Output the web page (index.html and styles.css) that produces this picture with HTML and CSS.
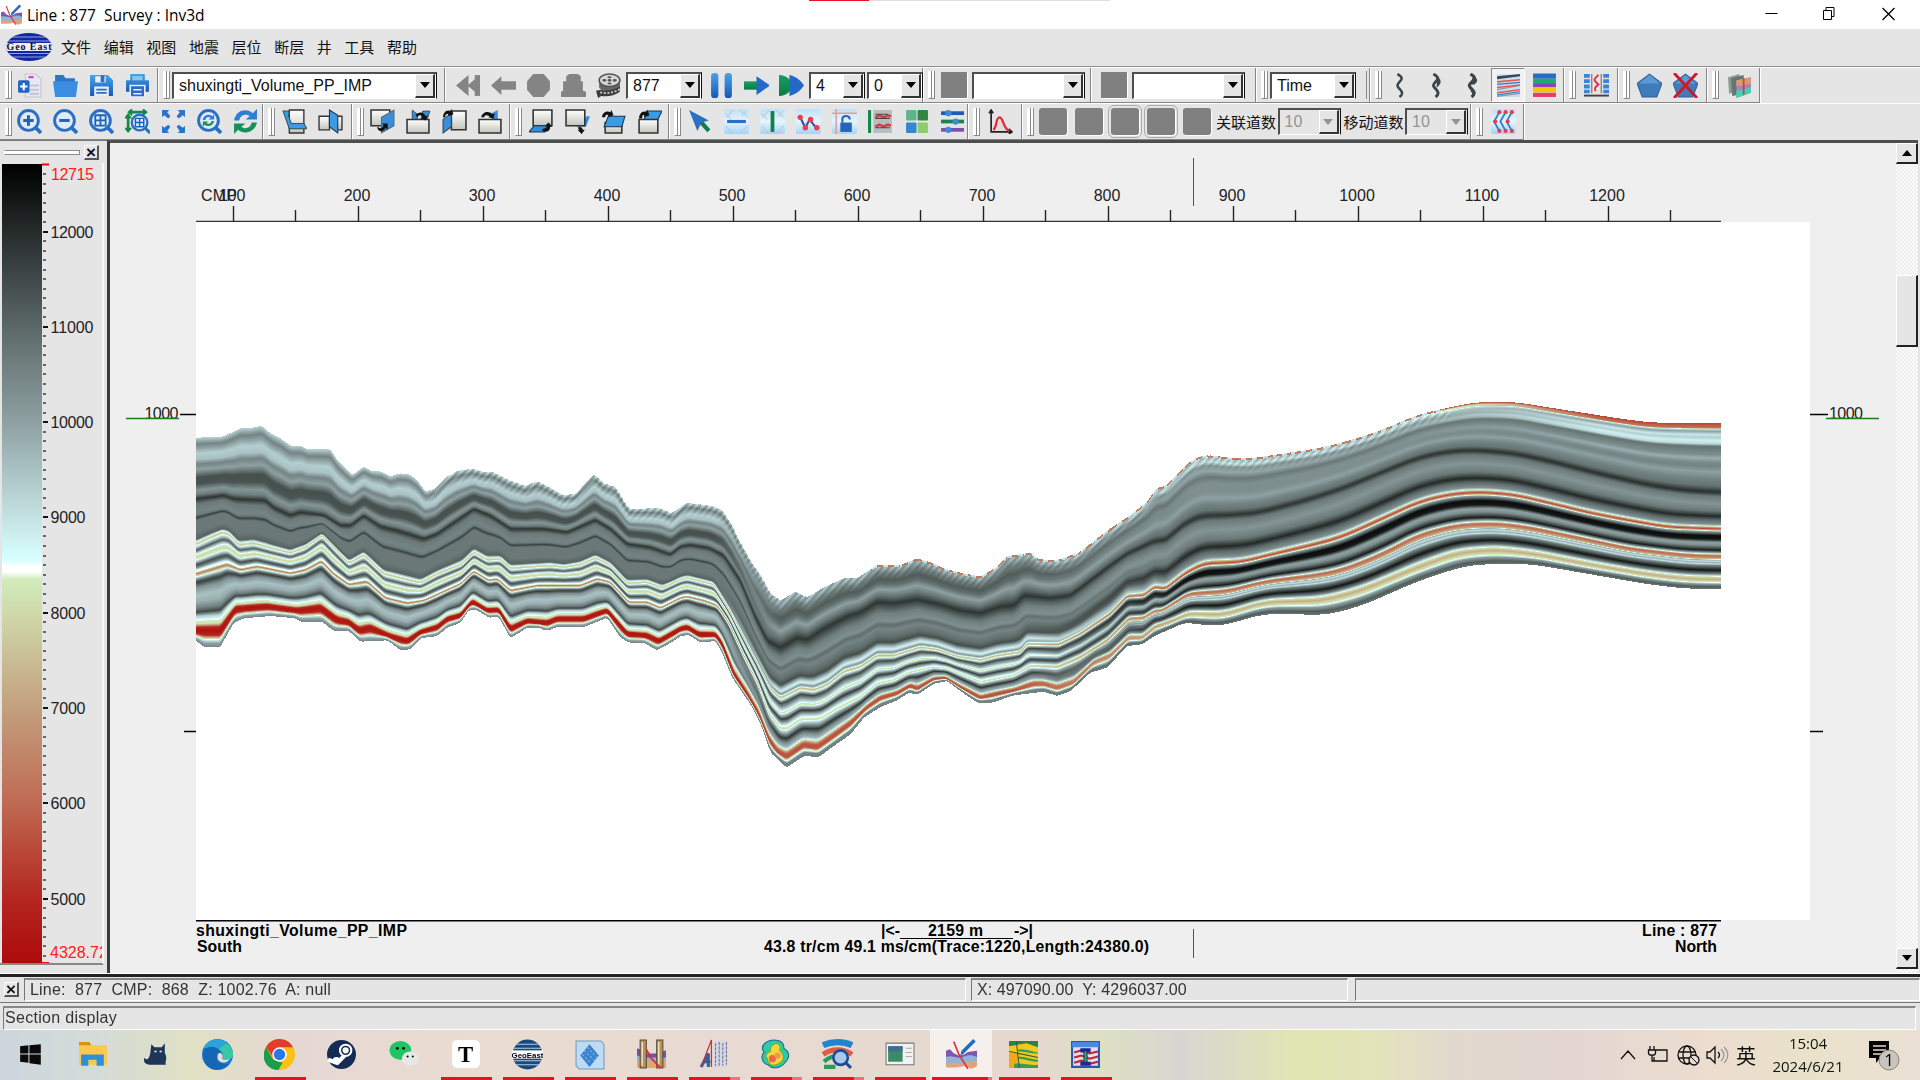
FILE: index.html
```html
<!DOCTYPE html>
<html lang="zh-CN">
<head>
<meta charset="utf-8">
<title>Line : 877 Survey : Inv3d</title>
<link rel="stylesheet" href="styles.css">
</head>
<body>
<svg class="defs" aria-hidden="true">
<defs>
<linearGradient id="gb" x2="0" y2="1"><stop stop-color="#4aa3e6"/><stop offset="1" stop-color="#1757b8"/></linearGradient>
<linearGradient id="gg" x2="0" y2="1"><stop stop-color="#18a060"/><stop offset="1" stop-color="#0b7a45"/></linearGradient>
<linearGradient id="gp" x2="0" y2="1"><stop stop-color="#fff"/><stop offset="1" stop-color="#c4c4bc"/></linearGradient>
<linearGradient id="gs" x2="0" y2="1"><stop stop-color="#bfe2f8"/><stop offset=".5" stop-color="#e6f4fd"/><stop offset="1" stop-color="#a5d3f2"/></linearGradient>
<symbol id="app" viewBox="0 0 24 24"><path d="M0 9l3-1 3 3 4 2 4-1 3-2 7-1v6H0z" fill="#7d56b0"/><path d="M0 14c5-2 9 2 13 0s7-2 11 0v4c-5 3-8-1-12 1s-8 0-12 1z" fill="#8fb4d8"/><path d="M0 19c6-2 10 1 14-1s6 0 10-1v4l-4 2-6-2-6 1-8 0z" fill="#e3a27e"/><path d="M6 2l4 10 7 11" stroke="#e23440" stroke-width="1.300" fill="none"/><path d="M11 13l1-4 9-9 2 2-9 9z" fill="#2469c4"/></symbol>
<symbol id="new" viewBox="0 0 24 24"><path d="M8 1h10l5 5v17H8z" fill="#e8e8f2" stroke="#c3c3d4"/><path d="M11 4h5" stroke="#b04ad0" stroke-width="2"/><path d="M12 12h9M12 16h9M12 20h9" stroke="#c5c5d8" stroke-width="2"/><rect x="1" y="7" width="11" height="12" rx="1.500" fill="#2166c2"/><path d="M6.500 9.500v7M3 13h7" stroke="#fff" stroke-width="2"/></symbol>
<symbol id="open" viewBox="0 0 24 24"><path d="M2 2h8l2 3h9v5H2z" fill="#2c74cc"/><path d="M0 8h24l-2 15H2z" fill="#3a8de0"/></symbol>
<symbol id="save" viewBox="0 0 24 24"><path d="M1 2h17l5 5v15H1z" fill="url(#gb)"/><path d="M6 3v6h10V3M5 22v-9h14v9" fill="#e6eef6"/><path d="M12 3h2v5h-2zM7 16h10M7 19h10" stroke="#2a70c8" stroke-width="1.600" fill="#2a70c8"/></symbol>
<symbol id="print" viewBox="0 0 24 24"><path d="M5 1h14v7H5zM1 7h22v11H1z" fill="url(#gb)"/><path d="M7 3h10v4H7z" fill="#8cc4f0"/><path d="M5 12h14v11H5z" fill="#2a6cc6" stroke="#e8eef6" stroke-width="1.500"/><path d="M8 16h8M8 20h8" stroke="#e8eef6" stroke-width="1.500"/></symbol>
<symbol id="rew" viewBox="0 0 24 24"><path d="M12 2v20L0 12zM23 2v20L11 12z" fill="#848484"/><path d="M18 2h5v20h-5z" fill="#848484"/></symbol>
<symbol id="back" viewBox="0 0 24 24"><path d="M0 12l10-9v5h14v8H10v5z" fill="#848484"/></symbol>
<symbol id="oct" viewBox="0 0 24 24"><path d="M7 1h10l6 7v8l-6 7H7l-6-7V8z" fill="#848484"/></symbol>
<symbol id="bell" viewBox="0 0 24 24"><path d="M2 17V8h3V3l3-2h8l3 2v5h2v9l3 1v5H0v-5z" fill="#848484"/></symbol>
<symbol id="film" viewBox="0 0 24 24"><path d="M3 7v7c3 5 16 5 20 0V7z" fill="#666"/><ellipse cx="13" cy="7" rx="10" ry="6" fill="#d8d8d4" stroke="#555" stroke-width="1.500"/><g fill="#555"><ellipse cx="13" cy="7" rx="2" ry="1.300"/><ellipse cx="8" cy="7" rx="2" ry="1.300"/><ellipse cx="18" cy="7" rx="2" ry="1.300"/><ellipse cx="13" cy="4" rx="2" ry="1"/><ellipse cx="13" cy="10" rx="2" ry="1"/></g><path d="M0 17l5-1c5 2 13 0 18-3v5c-5 4-13 5-18 4l-3 2z" fill="#3c3c3c"/><path d="M4 18.500c6 2 14 0 19-3" stroke="#bbb" stroke-dasharray="2 1.500" stroke-width="2" fill="none"/></symbol>
<symbol id="pause" viewBox="0 0 24 24"><rect x="2" y="0" width="7" height="24" rx="3" fill="url(#gb)"/><rect x="15" y="0" width="7" height="24" rx="3" fill="url(#gb)"/></symbol>
<symbol id="fwd" viewBox="0 0 24 24"><path d="M0 8h13v8H0z" fill="url(#gg)"/><path d="M12 3l13 9-13 9z" fill="#2468c8"/></symbol>
<symbol id="ff" viewBox="0 0 24 24"><path d="M0 2c8 0 11 5 14 10C11 17 8 22 0 22z" fill="url(#gg)"/><path d="M10 2c8 2 11 6 14 10-3 4-6 8-14 10z" fill="#2468c8"/></symbol>
<symbol id="mag" viewBox="0 0 24 24"><circle cx="11" cy="11" r="9.500" fill="#dfeaf6" stroke="#2b6fc4" stroke-width="2.800"/><path d="M17 17l6 6" stroke="#2b6fc4" stroke-width="3.600"/></symbol>
<symbol id="zin" viewBox="0 0 24 24"><use href="#mag"/><path d="M11 6v10M6 11h10" stroke="#2060b8" stroke-width="2.800"/></symbol>
<symbol id="zout" viewBox="0 0 24 24"><use href="#mag"/><path d="M6 11h10" stroke="#2060b8" stroke-width="2.800"/></symbol>
<symbol id="zbox" viewBox="0 0 24 24"><use href="#mag"/><path d="M6 6h10v10H6zM11 6v10M6 11h10" stroke="#2060b8" stroke-width="1.700" fill="none"/></symbol>
<symbol id="zfit" viewBox="0 0 24 24"><circle cx="14" cy="13" r="7.500" fill="#dfeaf6" stroke="#2b6fc4" stroke-width="2.200"/><path d="M19 18l5 5" stroke="#2b6fc4" stroke-width="3"/><path d="M10 9h8v8h-8zM14 9v8M10 13h8" stroke="#2060b8" stroke-width="1.400" fill="none"/><path d="M4 3h16M3 5v16" stroke="#12884d" stroke-width="2.600"/><path d="M7-1L2 3l5 4zM17-1l5 4-5 4zM-1 9l4-5 4 5zM-1 18l4 5 4-5z" fill="#12884d"/></symbol>
<symbol id="full" viewBox="0 0 24 24"><path d="M1 1h7L6 3l3 4-2 2-4-3-2 2zM23 1h-7l2 2-3 4 2 2 4-3 2 2zM1 23h7l-2-2 3-4-2-2-4 3-2-2zM23 23h-7l2-2-3-4 2-2 4 3 2-2z" fill="#2b74c8"/></symbol>
<symbol id="arrows" viewBox="0 0 24 24"><path d="M1 11C3 0 14-1 19 4l4-4v10H12l4-3C12 4 7 6 6 11z" fill="#2b7fd4"/><path d="M23 13c-2 10-13 12-18 7l-4 4V14h11l-4 3c4 3 9 1 10-4z" fill="#16915a"/></symbol>
<symbol id="zref" viewBox="0 0 24 24"><use href="#mag"/><use href="#arrows" x="5" y="5" width="12" height="12"/></symbol>
<symbol id="s1" viewBox="0 0 24 24"><path d="M7 1h14v14H7zM7 18h14v5H7z" fill="url(#gp)" stroke="#333" stroke-width="1.300"/><path d="M1 2h5l1 2-1 2 3 8h12l3 5H7z" fill="#3b9ce4" stroke="#355"/></symbol>
<symbol id="s2" viewBox="0 0 24 24"><path d="M1 7h10v13H1zM18 7h5v13h-5z" fill="url(#gp)" stroke="#333" stroke-width="1.300"/><path d="M11 1l8 5v17l-8-6z" fill="#3b9ce4" stroke="#234"/></symbol>
<symbol id="s3" viewBox="0 0 24 24"><path d="M1 1h18v15H1z" fill="url(#gp)" stroke="#333" stroke-width="1.500"/><path d="M23 1v15l-12 7V8z" fill="#3b8ed8" stroke="#567"/><path d="M7 17c0 5 6 6 8 1l2 2v-6h-5l1 2c-2 3-3 3-6 1z" fill="#111"/></symbol>
<symbol id="s4" viewBox="0 0 24 24"><path d="M6 1l5 4v7H6zM16 2h7l-3 9h-6z" fill="#3b8ed8" stroke="#234" stroke-width=".7"/><path d="M1 10h21v13H1z" fill="url(#gp)" stroke="#333" stroke-width="1.500"/><path d="M9 6c4-5 9-2 10 1l2-1-2 5-5-2 2-1c-2-3-4-2-5 0z" fill="#111"/></symbol>
<symbol id="s5" viewBox="0 0 24 24"><path d="M9 2h14v18H9z" fill="url(#gp)" stroke="#333" stroke-width="1.500"/><path d="M1 10l8-6v13l-8 6z" fill="#3b8ed8" stroke="#345"/><path d="M1 8C1 3 5 0 8 2l1-2 2 5-5 2V5C4 4 3 6 3 8z" fill="#111"/></symbol>
<symbol id="s6" viewBox="0 0 24 24"><path d="M13 4l6-3v12h-6z" fill="#3b8ed8"/><path d="M1 10h21v13H1z" fill="url(#gp)" stroke="#333" stroke-width="1.500"/><path d="M3 8c1-5 7-7 11-3l2-1-1 5-5-1 1-1c-3-2-5-1-5 1z" fill="#111"/></symbol>
<symbol id="s7" viewBox="0 0 24 24"><path d="M4 1h18v15H4z" fill="url(#gp)" stroke="#333" stroke-width="1.500"/><path d="M5 16h16l-6 6H0z" fill="#2d8fe0" stroke="#234"/><path d="M13 21c5 2 8-1 7-4h2l-3-4-4 3h2c0 2-2 3-4 3z" fill="#111"/></symbol>
<symbol id="s8" viewBox="0 0 24 24"><path d="M21 7h3l-4 10h-9z" fill="#2d8fe0"/><path d="M1 1h18v15H1z" fill="url(#gp)" stroke="#333" stroke-width="1.500"/><path d="M12 18c3-2 5 0 5 2h2l-3 4-4-4h2z" fill="#111"/></symbol>
<symbol id="s9" viewBox="0 0 24 24"><path d="M4 13h16v10H4z" fill="url(#gp)" stroke="#333" stroke-width="1.500"/><path d="M7 7h16l-3 10H3z" fill="#3a9ce6" stroke="#234"/><path d="M1 8c0-4 4-7 8-5l1-2 2 5-5 2V6C5 5 4 6 4 8z" fill="#111"/></symbol>
<symbol id="s10" viewBox="0 0 24 24"><path d="M9 2h15l-4 8H7z" fill="#3a9ce6" stroke="#234"/><path d="M2 10h18v13H2z" fill="url(#gp)" stroke="#333" stroke-width="1.500"/><path d="M2 9c0-4 3-8 7-6l1-2 2 5-5 2V6C5 5 5 7 5 9z" fill="#111"/></symbol>
<symbol id="cur" viewBox="0 0 24 24"><path d="M12 12l8 9" stroke="#0f7d4c" stroke-width="4"/><path d="M1 1l19 10-7 2-4 8z" fill="#2a70c4"/></symbol>
<symbol id="pad" viewBox="0 0 24 24"><rect width="24" height="24" rx="2" fill="url(#gs)"/></symbol>
<symbol id="hl" viewBox="0 0 24 24"><use href="#pad"/><path d="M2 8L9 1M15 1l8 7M2 17l6 6M16 23l7-7M1 4l6 6M17 7l5-5" stroke="#b8cbd8"/><path d="M3 12h18" stroke="#2570c4" stroke-width="3"/></symbol>
<symbol id="vl" viewBox="0 0 24 24"><use href="#pad"/><path d="M2 8L9 1M15 1l8 7M2 17l6 6M16 23l7-7M1 4l6 6M17 7l5-5" stroke="#b8cbd8"/><path d="M12 2v20" stroke="#0e8248" stroke-width="3.600"/></symbol>
<symbol id="poly" viewBox="0 0 24 24"><use href="#pad"/><path d="M4 8l5 10 4-8 7 9" stroke="#3a4c9c" stroke-width="2" fill="none"/><g fill="#e8404c"><circle cx="4" cy="8" r="2.600"/><circle cx="9" cy="18" r="2.600"/><circle cx="14" cy="10" r="2.600"/><circle cx="20" cy="18" r="2.600"/></g></symbol>
<symbol id="lock" viewBox="0 0 24 24"><use href="#pad"/><path d="M0 4h24M4 0v24" stroke="#e89a9e" stroke-width="1.500"/><path d="M10 13V9c1-3 6-3 7 0v1" stroke="#2464bc" stroke-width="2" fill="none"/><path d="M8 13h11v9H8z" fill="#2464bc"/></symbol>
<symbol id="wig" viewBox="0 0 24 24"><path d="M0 1h3v22H0z" fill="#10894c"/><path d="M5 1h18v22H5z" fill="#b4c0c0"/><path d="M7 8l4-2 4 2 4-2 3 1M7 17l4-2 4 2 4-2 3 1" stroke="#d83c40" stroke-width="2.400" fill="none"/><path d="M7 9h14M7 18h14M7 5h12" stroke="#444"/></symbol>
<symbol id="grid" viewBox="0 0 24 24"><rect x="2" y="1" width="10" height="10" rx="1" fill="#5db58c"/><rect x="13" y="1" width="10" height="10" rx="1" fill="#348540"/><rect x="2" y="13" width="10" height="10" rx="1" fill="#3586cc"/><rect x="13" y="13" width="10" height="10" rx="1" fill="#92cb6c"/></symbol>
<symbol id="slid" viewBox="0 0 24 24"><path d="M1 4h22" stroke="#1f58b4" stroke-width="3.600"/><path d="M1 12h22" stroke="#168550" stroke-width="3.600"/><path d="M1 20h22" stroke="#7c50ac" stroke-width="3.600"/><g fill="#3a8bd8"><circle cx="8" cy="4" r="3"/><circle cx="15" cy="12" r="3"/><circle cx="8" cy="20" r="3"/></g></symbol>
<symbol id="curve" viewBox="0 0 24 24"><path d="M3 1v21h20M1 4l2-3 2 3M20 19l3 3-3 2" stroke="#222" stroke-width="1.600" fill="none"/><path d="M5 20c4-2 2-12 6-12s3 10 9 13" stroke="#e8283c" stroke-width="2.200" fill="#ddd"/></symbol>
<symbol id="q1" viewBox="0 0 24 24"><path d="M9 1c11 6-4 8 1 13 4 4 5 6 1 9" stroke="#3c4548" stroke-width="2.400" fill="none"/></symbol>
<symbol id="q2" viewBox="0 0 24 24"><path d="M9 1c11 6-4 8 1 13 4 4 5 6 1 9" stroke="#3c4548" stroke-width="2.800" fill="none"/><path d="M13 3c5 5 3 8-1 11z" fill="#3c4548"/></symbol>
<symbol id="q3" viewBox="0 0 24 24"><path d="M10 1c11 6-5 8 0 13 4 4 5 6 1 9" stroke="#3c4548" stroke-width="3" fill="none"/><path d="M13 2c5 5 4 6 1 9h-4zM9 14l6 4-2 5z" fill="#3c4548"/></symbol>
<symbol id="seis" viewBox="0 0 24 24"><path d="M1 1l22 1v21H1z" fill="#c9dff0"/><path d="M1 3l22-2v2L1 6z" fill="#33485a"/><path d="M1 16l22-4M1 22.500l22-3" stroke="#8898a8" stroke-width="1.200"/><path d="M1 8.500l22-2M1 14l22-2.500M1 19l22-3" stroke="#e8594c" stroke-width="1.500"/><path d="M1 11l22-2M1 21l22-3" stroke="#3478c8" stroke-width="1.200"/></symbol>
<symbol id="bars" viewBox="0 0 24 24"><path d="M1 3h22" stroke="#286cc8" stroke-width="5"/><path d="M1 8h22" stroke="#22a878" stroke-width="5"/><path d="M1 12h22" stroke="#8448b8" stroke-width="4"/><path d="M1 16h22" stroke="#f6c400" stroke-width="5"/><path d="M1 21h22" stroke="#e83c68" stroke-width="4"/></symbol>
<symbol id="tie" viewBox="0 0 26 24"><path d="M3 0v20M23 0v20" stroke="#3a84d8" stroke-width="6" stroke-dasharray="4 1.500"/><path d="M8 0v20M18 0v20" stroke="#888" stroke-width="1.500"/><path d="M15 1c-6 6-5 5 0 10-4 3-4 4-3 7" stroke="#f02838" stroke-width="2" fill="none"/><path d="M0 22.500h26" stroke="#444" stroke-width="2"/></symbol>
<symbol id="pent" viewBox="0 0 24 24"><path d="M12 1l12 9-5 13H5L0 10z" fill="#3f7cbc" stroke="#2f649c"/><path d="M12 2l10 8H2z" fill="#6aa8dc" opacity=".7"/></symbol>
<symbol id="pentx" viewBox="0 0 24 24"><use href="#pent"/><path d="M1 0l22 24M23 0L1 24" stroke="#d01828" stroke-width="2.800"/></symbol>
<symbol id="vol" viewBox="0 0 24 24"><path d="M1 4l11-3v16L2 20z" fill="#8b9b94"/><path d="M4 5l12-3v18L5 22z" fill="#64766e"/><path d="M9 7l14-3v15L9 24z" fill="#ae80b8"/><path d="M9 7l14-3v6L9 13z" fill="#d89a70"/><path d="M9 17l14-3v5L9 24z" fill="#3dd4b0"/><path d="M16 5v16" stroke="#d83848" stroke-width="1.600"/></symbol>
<symbol id="wells" viewBox="0 0 24 24"><use href="#pad"/><path d="M8 3L3 12l5 9M14 3L9 12l5 9M20 3l-5 9 5 9" stroke="#2f84cc" stroke-width="1.800" fill="none"/><g fill="#ee3a48"><circle cx="8" cy="3" r="2"/><circle cx="14" cy="3" r="2"/><circle cx="20" cy="3" r="2"/><circle cx="4" cy="12" r="2"/><circle cx="16" cy="12" r="2"/><circle cx="8" cy="21" r="2"/><circle cx="14" cy="21" r="2"/><circle cx="20" cy="21" r="2"/></g></symbol>
</defs>
</svg>

<header class="titlebar">
  <svg class="appicon"><use href="#app"/></svg>
  <span class="title">Line : 877&nbsp; Survey : Inv3d</span>
  <div class="topstrip"><i></i></div>
  <svg class="wctl" viewBox="0 0 150 30"><path d="M14.500 13.500h12M72.500 10.500h8v9h-8zM75 10v-2.500h8v9h-2" fill="none" stroke="#000"/><path d="M131.500 8l12 12M143.500 8l-12 12" fill="none" stroke="#000" stroke-width="1.300"/></svg>
</header>

<nav class="menubar">
  <svg class="brand" viewBox="0 0 46 28"><clipPath id="bc"><ellipse cx="23" cy="14" rx="23" ry="14"/></clipPath><g clip-path="url(#bc)"><path d="M0 0h46v28H0z" fill="#1228a0"/><path d="M0 4h46M0 8h46M0 20.500h46M0 24h46" stroke="#8fa4e0"/><path d="M0 10h46v8H0z" fill="#eef"/></g><text x="23" y="17" text-anchor="middle" textLength="45" class="brandtext">Geo East</text></svg>
  <span>文件</span><span>编辑</span><span>视图</span><span>地震</span><span>层位</span><span>断层</span><span>井</span><span>工具</span><span>帮助</span>
</nav>

<div class="toolrow">
  <div class="group w158"><b class="grip"></b><svg class="i"><use href="#new"/></svg><svg class="i"><use href="#open"/></svg><svg class="i"><use href="#save"/></svg><svg class="i"><use href="#print"/></svg></div>
  <div class="group w287"><b class="grip"></b><div class="combo c265">shuxingti_Volume_PP_IMP<u></u></div></div>
  <div class="group w478 nogrip play"><svg class="i"><use href="#rew"/></svg><svg class="i"><use href="#back"/></svg><svg class="i"><use href="#oct"/></svg><svg class="i"><use href="#bell"/></svg><svg class="i"><use href="#film"/></svg><div class="combo c75">877<u></u></div><svg class="i"><use href="#pause"/></svg><svg class="i"><use href="#fwd"/></svg><svg class="i"><use href="#ff"/></svg><div class="combo c56">4<u></u></div><div class="combo c56">0<u></u></div></div>
  <div class="group w168"><b class="grip"></b><i class="sq"></i><div class="combo c113"><u></u></div></div>
  <div class="group w165 nogrip"><i class="sq"></i><div class="combo c113"><u></u></div></div>
  <div class="group w114"><b class="grip"></b><div class="combo c86">Time<u></u></div><b class="rule"></b></div>
  <div class="group w194"><b class="grip"></b><svg class="i"><use href="#q1"/></svg><svg class="i"><use href="#q2"/></svg><svg class="i"><use href="#q3"/></svg><span class="pressed"><svg class="i"><use href="#seis"/></svg></span><svg class="i"><use href="#bars"/></svg></div>
  <div class="group w54"><b class="grip"></b><svg class="i tie"><use href="#tie"/></svg></div>
  <div class="group w89"><b class="grip"></b><svg class="i shift"><use href="#pent"/></svg><svg class="i"><use href="#pentx"/></svg></div>
  <div class="group w53"><b class="grip"></b><svg class="i tie"><use href="#vol"/></svg></div>
</div>
<div class="toolrow second">
  <div class="group w263"><b class="grip"></b><svg class="i"><use href="#zin"/></svg><svg class="i"><use href="#zout"/></svg><svg class="i"><use href="#zbox"/></svg><svg class="i"><use href="#zfit"/></svg><svg class="i"><use href="#full"/></svg><svg class="i"><use href="#zref"/></svg><svg class="i"><use href="#arrows"/></svg></div>
  <div class="group w89"><b class="grip"></b><svg class="i shift"><use href="#s1"/></svg><svg class="i"><use href="#s2"/></svg></div>
  <div class="group w158"><b class="grip"></b><svg class="i"><use href="#s3"/></svg><svg class="i"><use href="#s4"/></svg><svg class="i"><use href="#s5"/></svg><svg class="i"><use href="#s6"/></svg></div>
  <div class="group w159"><b class="grip"></b><svg class="i shift"><use href="#s7"/></svg><svg class="i"><use href="#s8"/></svg><svg class="i"><use href="#s9"/></svg><svg class="i"><use href="#s10"/></svg></div>
  <div class="group w299"><b class="grip"></b><svg class="i shift"><use href="#cur"/></svg><svg class="i"><use href="#hl"/></svg><svg class="i"><use href="#vl"/></svg><svg class="i"><use href="#poly"/></svg><svg class="i"><use href="#lock"/></svg><svg class="i"><use href="#wig"/></svg><svg class="i"><use href="#grid"/></svg><svg class="i"><use href="#slid"/></svg></div>
  <div class="group w54"><b class="grip"></b><svg class="i tie"><use href="#curve"/></svg></div>
  <div class="group w449"><b class="grip"></b><i class="sq lg"></i><i class="sq lg"></i><i class="sq lg down"></i><i class="sq lg down"></i><i class="sq lg"></i><span class="lbl">关联道数</span><div class="combo off c63">10<u></u></div><span class="lbl">移动道数</span><div class="combo off c63">10<u></u></div></div>
  <div class="group w53"><b class="grip"></b><svg class="i tie"><use href="#wells"/></svg></div>
</div>

<main class="work">
  <aside class="dock">
    <div class="dockhead"><b></b><span class="close">×</span></div>
    <div class="scale"><div class="ramp"></div><svg id="ticks" width="62" height="804"></svg></div>
  </aside>
  <section class="view">
    <svg id="axis" class="axis" width="1786" height="79"></svg>
    <div class="plotrow">
      <svg class="side left" viewBox="0 0 86 698"><path d="M70 192.500h16M74 509.500h12" stroke="#000" stroke-width="1.400"/><text x="34.500" y="197" textLength="34">1000</text><path d="M16 196.500h53" stroke="#1d7a1d" stroke-width="1.400"/></svg>
      <div class="plot"><canvas id="section" width="1525" height="698"></canvas></div>
      <svg class="side right" viewBox="0 0 86 698"><path d="M0 192.500h18M0 509.500h13" stroke="#000" stroke-width="1.400"/><text x="19" y="197" textLength="34">1000</text><path d="M16 196.500h53" stroke="#1d7a1d" stroke-width="1.400"/></svg>
    </div>
    <svg class="foot" width="1786" height="54"><path d="M86 .5h1525" stroke="#000" stroke-width="2"/><path d="M790 18.500h113" stroke="#000"/><path d="M1083.500 9v29" stroke="#1d7a1d"/>
      <text x="86" y="16" textLength="211">shuxingti_Volume_PP_IMP</text><text x="87" y="32" textLength="45">South</text>
      <text x="771" y="16">|&lt;-</text><text x="818" y="16" textLength="55">2159 m</text><text x="904" y="16">-&gt;|</text><text x="654" y="32" textLength="385">43.8 tr/cm 49.1 ms/cm(Trace:1220,Length:24380.0)</text>
      <text x="1532" y="16" textLength="75">Line : 877</text><text x="1565" y="32" textLength="42">North</text></svg>
  </section>
  <div class="scroll"><b class="btn up"></b><b class="thumb"></b><b class="btn dn"></b></div>
</main>

<div class="status"><span class="close">×</span><div class="cell a">Line:  877  CMP:  868  Z: 1002.76  A: null</div><div class="cell b">X: 497090.00  Y: 4296037.00</div><div class="cell c"></div></div>
<div class="hint"><div class="cell">Section display</div></div>

<footer class="taskbar">
  <div class="task"><svg viewBox="0 0 30 30"><path d="M4 7l8-1v8H4zM13 6l11-1v9H13zM4 15h8v8l-8-1zM13 15h11v10l-11-1.500z" fill="#0a0a0a"/></svg></div>
  <div class="task"><svg viewBox="0 0 30 30"><path d="M1 3h10l2 3h15v19H1z" fill="#fbc94d"/><path d="M1 3h10l2 3H1z" fill="#d8920c"/><path d="M3 26V15h22v11h-7v-6h-8v6z" fill="#2f8ede"/></svg></div>
  <div class="task"><svg viewBox="0 0 30 30"><path d="M11 5l3 3h7l3-4v9c3 7 0 8 1 12H9c-6-1-5-4-5-7 2 3 5 2 6-5z" fill="#1d3557"/><path d="M14 12h2M19 12h2" stroke="#fff" stroke-width="1.500"/></svg></div>
  <div class="task"><svg viewBox="0 0 30 30"><circle cx="15" cy="15" r="15" fill="#0f7fd4"/><path d="M2 9C7-2 26-2 30 13c1 7-5 8-10 6 3-8-8-13-18-10z" fill="#38c8a4"/><path d="M2 8C7-1 18-2 24 4l-8 6z" fill="#2ba4dc"/><path d="M2 10c9-6 17 0 17 6-8 0-5 10 7 8-12 13-29 2-24-14z" fill="#1566b4"/><path d="M15 16c0-4 6-3 5 2-2 2 3 3 7 1-2 5-13 6-12-3z" fill="#e6dcd8"/></svg></div>
  <div class="task run"><svg viewBox="0 0 30 30"><circle cx="15" cy="15" r="15" fill="#fbc116"/><path d="M2 8C8-3 23-2 28 8H15l-6 10z" fill="#e33b2e"/><path d="M2 8l7 12 9 3-4 7C2 30-4 18 2 8z" fill="#1e9c4a"/><circle cx="15" cy="15" r="7" fill="#fff"/><circle cx="15" cy="15" r="5.500" fill="#2a78e8"/></svg></div>
  <div class="task"><svg viewBox="0 0 30 30"><circle cx="15" cy="15" r="14" fill="#142c54"/><path d="M2 20l9 3 7-7" stroke="#fff" stroke-width="4" fill="none"/><circle cx="19" cy="11" r="5.500" fill="#142c54" stroke="#fff" stroke-width="2"/><circle cx="19" cy="11" r="3" fill="#fff"/><circle cx="10" cy="21" r="3.500" fill="#fff"/></svg></div>
  <div class="task"><svg viewBox="0 0 30 30"><ellipse cx="12" cy="11" rx="10.500" ry="9" fill="#1fc465"/><circle cx="9" cy="9" r="1.300"/><circle cx="15" cy="9" r="1.300"/><ellipse cx="21.500" cy="19" rx="8" ry="7" fill="#e8e8e8"/><circle cx="19" cy="17" r="1"/><circle cx="24" cy="17" r="1"/></svg></div>
  <div class="task run"><svg viewBox="0 0 30 30"><rect x="2" y="1" width="27" height="27" rx="5" fill="#fff"/><text x="15" y="22" text-anchor="middle" class="tt">T</text></svg></div>
  <div class="task run"><svg viewBox="0 0 30 30"><clipPath id="gc"><circle cx="15" cy="15" r="14.500"/></clipPath><g clip-path="url(#gc)"><path d="M0 0h30v30H0z" fill="#174a80"/><path d="M2 5h26M0 9h30M0 21h30M4 25h22" stroke="#b8cce0"/></g><path d="M0 11h30v8H0z" fill="#fff"/><text x="15" y="18" text-anchor="middle" class="ge">GeoEast</text></svg></div>
  <div class="task run"><svg viewBox="0 0 30 30"><path d="M2 2h24l3 3v24H5l-3-3z" fill="#bcdcf6" stroke="#7899b8"/><path d="M15 5l9 11-9 11-9-11z" fill="#3e83d0"/><path d="M10 11l10 10M8 15l8 8M13 8l9 10" stroke="#8bbcf0" stroke-dasharray="2"/></svg></div>
  <div class="task run"><svg viewBox="0 0 30 30"><path d="M1 9l5 2 5 3h9l9-3v9H1z" fill="#7650a4"/><path d="M1 16l10 2h18v5H1z" fill="#8fb4d8"/><path d="M1 21h28v7H1z" fill="#dca870"/><path d="M4 1h6v27H4zM20 1h6v27h-6z" fill="#b9905a" stroke="#5c4a38"/><path d="M6 3v23M22 3v23" stroke="#dfe6c0" stroke-width="1.500"/><path d="M10 10l5 9 9 9" stroke="#e02838" stroke-width="1.600" fill="none"/></svg></div>
  <div class="task run more"><svg viewBox="0 0 30 30"><path d="M15 2h14v25H15z" fill="#d8d8e4"/><path d="M17 4v22M20.500 3v23M24 4v22M27.500 3v22" stroke="#666e90" stroke-dasharray="3 1"/><path d="M3 27l7-13v13M5 22h7" stroke="#34609c" stroke-width="3" fill="none"/><path d="M3 27L13 1v26" stroke="#c83040" stroke-width="1.200" fill="none"/></svg></div>
  <div class="task run more"><svg viewBox="0 0 30 30"><path d="M6 3C13-1 24 1 23 9c5 3 7 8 1 14 -4 6-13 6-16 2C2 24 0 16 4 13 1 9 2 6 6 3z" fill="#29cba8" stroke="#268"/><path d="M12 6c5-4 9 0 7 5 5 4 5 10-1 13-5 3-10 1-11-5-3-3 0-6 3-7 0-3 0-5 2-6z" fill="#f4d438" stroke="#7a3"/><circle cx="12" cy="19" r="3.500" fill="#e9684c"/><circle cx="17" cy="16" r="3" fill="#ee9850"/></svg></div>
  <div class="task run more"><svg viewBox="0 0 30 30"><path d="M1 6c9-4 20-4 28 0" stroke="#2084d0" stroke-width="6" fill="none"/><path d="M1 15c8-6 20-6 28 0" stroke="#e05c44" stroke-width="5" fill="none"/><path d="M2 22c4-4 7-5 10-5M2 27h11" stroke="#219e60" stroke-width="4" fill="none"/><circle cx="18" cy="18" r="7" fill="#a8c8ec" stroke="#1b4e98" stroke-width="2.500"/><path d="M23 23l5 5" stroke="#1b4e98" stroke-width="3"/></svg></div>
  <div class="task run"><svg viewBox="0 0 30 30"><path d="M2 4h27v21H2z" fill="#f2f2f2" stroke="#777"/><path d="M4 7h14v15H4z" fill="#3b8a68"/><path d="M4 7h14v5H4z" fill="#3d7090"/><path d="M21 9h6M21 13h6M21 17h6" stroke="#aaa"/></svg></div>
  <div class="task run active"><svg viewBox="0 0 24 24"><use href="#app"/></svg></div>
  <div class="task run"><svg viewBox="0 0 30 30"><path d="M1 2h28v26H1z" fill="#f4c81c"/><path d="M1 2h28v6L18 4 1 7z" fill="#248448"/><path d="M1 14h9v14H1z" fill="#f0a818"/><path d="M10 10c6-1 13 2 19 3v1c-7 0-14-2-19-2zM10 17c7 0 12 3 19 3v2c-8 0-13-3-19-3zM6 24c9-1 16 2 23 1v3H6z" fill="#30a058"/><path d="M8 2l3 26M1 12l28 6" stroke="#3c5c28"/></svg></div>
  <div class="task run"><svg viewBox="0 0 30 30"><path d="M2 3h26v24H2z" fill="#e8dce8" stroke="#2358b4" stroke-width="2"/><path d="M2 3h26v5H2z" fill="#4a8ae0"/><path d="M4 13l7-2 8 3 8-2M4 18l7-2 8 3 8-2M4 23l7-2 8 3 8-2" stroke="#b82838" stroke-width="2" fill="none"/><path d="M10 11h10M15 10v15M10 24h10" stroke="#1c2890" stroke-width="4"/><path d="M15 12v10" stroke="#2cb44c" stroke-width="2"/></svg></div>
  <div class="tray">
    <svg viewBox="0 0 150 30"><g fill="none" stroke="#111" stroke-width="1.300"><path d="M8 19l7-8 7 8M41 10h13v11H41v-4M37 6v4M41 6v4M35.500 10h7v3c0 3-7 3-7 0zM39 15v6h3"/><circle cx="74" cy="15" r="9"/><ellipse cx="74" cy="15" rx="4" ry="9"/><path d="M65 12h18M65 18h18M94 12h3l5-5v16l-5-5h-3z"/><path d="M105 12c2 2 2 4 0 6"/><path d="M108 9c4 4 4 8 0 12M111 7c5 5 5 11 0 16" stroke="#999"/></g><circle cx="81" cy="20" r="5" fill="#e6dad2" stroke="#111" stroke-width="1.300"/><path d="M78 17l6 6" stroke="#111"/></svg>
    <span class="ime">英</span>
    <div class="clock"><span>15:04</span><span>2024/6/21</span></div>
    <svg class="note" viewBox="0 0 34 34"><path d="M1 3h20v17h-9l-4 5v-5H1z" fill="#000"/><path d="M5 8h13M5 12h13M5 16h10" stroke="#e8dccc" stroke-width="1.500"/><circle cx="21" cy="22" r="10" fill="#c8c4bc" stroke="#8a8680"/><text x="21" y="28" text-anchor="middle">1</text></svg>
  </div>
</footer>
<script src="section.js"></script>
</body>
</html>
```
FILE: styles.css
```css
* { box-sizing: border-box; }
body { margin: 0; width: 1920px; height: 1080px; overflow: hidden; display: flex; flex-direction: column; background: #e5e5e5; color: #111; font: 16px "Liberation Sans", "Noto Sans CJK SC", sans-serif; }
.defs { position: absolute; width: 0; height: 0; }

.titlebar { height: 29px; background: #fff; display: flex; align-items: center; position: relative; flex: none; }
.appicon { width: 21px; height: 22px; margin: 0 5px 0 1px; }
.title { font: 15.500px "Open Sans", "Noto Sans", sans-serif; color: #000; flex: 1; }
.topstrip { position: absolute; left: 809px; top: 0; width: 301px; height: 1px; background: #dedede; }
.topstrip i { display: block; width: 60px; height: 1px; background: #e81123; }
.wctl { width: 150px; height: 30px; margin-right: 19px; }

.menubar { height: 38px; flex: none; display: flex; align-items: center; gap: 12.600px; font-size: 15px; padding: 0 0 2px 6px; border-bottom: 1px solid #8d8d8d; }
.brand { width: 46px; height: 28px; margin-right: -3.500px; }
.brandtext { font: bold 10px "Liberation Serif", serif; fill: #111; }

.toolrow { display: flex; height: 36px; flex: none; border-top: 1px solid #fff; }
.second { height: 37px; }
.group { display: flex; align-items: center; flex: none; border-right: 1px solid #858585; border-bottom: 1px solid #858585; box-shadow: 1px 0 #fff; }
.group:first-child .grip { margin-right: 0; }
.nogrip { padding-left: 6px; }
.grip { width: 7px; height: 28px; margin: 0 1px 0 5px; flex: none; border: solid #8a8a8a; border-width: 0 1px; background: linear-gradient(90deg, #fff 40%, #8a8a8a 40% 60%, #fff 60%); border-left-color: #fff; border-bottom: 1px solid #8a8a8a; }
.rule { width: 1px; height: 28px; background: #8a8a8a; margin-left: 8px; }
.i { width: 25px; height: 25px; margin: 0 6px 0 5px; flex: none; }
.play .i { margin: 0 5px; }
.i.tie { margin-left: 7px; }
.i.shift { margin-left: 6px; }
.pressed { width: 34px; height: 34px; margin: 0 2px 0 0; flex: none; display: grid; place-items: center; background: #f1f1f1; border: 1px solid #888; border-right-color: #fff; border-bottom-color: #fff; }
.pressed .i { margin: 0; }
.combo { height: 27px; flex: none; display: flex; justify-content: space-between; align-items: center; background: #fff; border: 2px solid #4c4f4c; border-right: 1px solid #111; border-bottom: 1px solid #fff; padding: 0 0 0 5px; margin-right: 2px; white-space: nowrap; }
.combo u { width: 20px; height: 24px; margin: 0 1px 0 auto; background: #e5e5e5; border: 1px solid #fff; border-right: 2px solid #333; border-bottom: 2px solid #333; display: grid; place-items: center; }
.combo u::after { content: ""; border: 5px solid transparent; border-top: 6px solid #000; border-bottom: 0; }
.combo.off { background: #e5e5e5; color: #949494; }
.combo.off u::after { border-top-color: #949494; }
.sq { width: 26px; height: 26px; background: #808080; margin: 0 5px 0 5px; flex: none; box-shadow: 1px 1px #fff; }
.nogrip .sq { margin-left: 4px; }
.sq.lg { width: 28px; height: 27px; border-radius: 3px; margin: 0 4px; }
.sq.lg.down { outline: 1px solid #aaa; outline-offset: 2px; }
.lbl { font-size: 15px; width: 61px; margin-left: 1px; white-space: nowrap; }
.w53 { width: 53px; } .w54 { width: 54px; } .w89 { width: 89px; } .w114 { width: 114px; } .w158 { width: 158px; } .w159 { width: 159px; }
.w165 { width: 165px; } .w168 { width: 168px; } .w194 { width: 194px; } .w263 { width: 263px; } .w287 { width: 287px; } .w299 { width: 299px; } .w449 { width: 449px; } .w478 { width: 478px; }
.c56 { width: 56px; } .c63 { width: 63px; margin-left: 1px; } .c75 { width: 76px; margin-right: 2px; } .c86 { width: 86px; margin-left: 1px; } .c113 { width: 113px; } .c265 { width: 265px; margin-left: 1px; }

.work { display: flex; height: 834px; flex: none; border-bottom: 1px solid #fff; }
.dock { width: 107px; overflow: hidden; border-top: 1px solid #777; }
.dockhead { height: 22px; display: flex; align-items: center; padding: 0 8px 0 4px; gap: 4px; }
.dockhead b { flex: 1; height: 5px; border: 1px solid #8a8a8a; border-left-color: #fff; background: #fff; }
.close { width: 15px; height: 15px; flex: none; font: bold 17px/13px "Liberation Sans", sans-serif; text-align: center; border: 1px solid #fff; border-right: 2px solid #555; border-bottom: 2px solid #555; }
.scale { display: flex; padding-left: 1.500px; width: 104px; height: 802px; border-right: 2px solid #f8f8f8; border-bottom: 2px solid #888; overflow: hidden; }
.ramp { width: 40px; height: 799px; margin-top: 1px; flex: none; background: linear-gradient(#000, #5b6866 20.400%, #8ea0a2 32.200%, #c4e2e3 44.200%, #d8ffff 49.500%, #fff 50.500% 51%, #d0ebbb 52%, #d0daab 56%, #c3a07e 68%, #bf6a52 80%, #b4261f 92%, #ad0b0b); }
.view { width: 1789px; flex: none; background: #efefef; border-left: 3px solid #3a3d3c; border-top: 3px solid #4b504e; }
.axis, .foot, .side { display: block; fill: #222; }
.axis text, .side text { font-size: 16px; }
.plotrow { display: flex; height: 698px; }
.side { width: 86px; height: 698px; }
.plot { width: 1614px; background: #fff; }
.plot canvas { display: block; }
.foot { font-weight: bold; font-size: 15.800px; fill: #000; }
.scroll { width: 22px; background: repeating-conic-gradient(#fafafa 0 25%, #eee 0 50%) 0 0/4px 4px; display: flex; flex-direction: column; border-top: 3px solid #4b504e; }
.btn, .thumb { width: 22px; background: #e5e5e5; border: 1px solid #fff; border-right: 2px solid #222; border-bottom: 2px solid #222; flex: none; display: grid; place-items: center; }
.btn { height: 21px; }
.btn::after { content: ""; border: 5px solid transparent; }
.up::after { border-bottom: 6px solid #000; border-top: 0; }
.dn::after { border-top: 6px solid #000; border-bottom: 0; }
.thumb { height: 72px; margin: 111px 0 auto; }
.dn { margin-bottom: 4px; }

.status { display: flex; align-items: center; height: 29px; flex: none; border-top: 3px solid #222; border-bottom: 1px solid #777; padding-left: 4px; }
.cell { height: 23px; line-height: 20px; white-space: pre; color: #333; border: 1px solid #fff; border-top: 2px solid #888; border-left: 1px solid #777; padding-left: 5px; }
.status .close { margin-right: 5px; }
.a { width: 942px; margin-right: 5px; letter-spacing: .2px; } .b { width: 377px; margin-right: 7px; letter-spacing: .1px; } .c { flex: 1; }
.hint { height: 27px; padding: 3px 4px 0 3px; }
.hint .cell { padding-left: 1px; height: 24px; line-height: 19px; letter-spacing: .3px; }

.taskbar { height: 50px; flex: none; display: flex; background: linear-gradient(90deg, #ccd6dc 0, #d4dbd8 90px, #e0e0c4 190px, #e5d8d3 290px, #eadcd1 480px, #e7dad2 700px, #e5d8ce 1040px, #dde0c4 1100px, #d9d6d2 1180px, #e1e5b2 1300px, #e2e4ba 1370px, #e2d9ce 1450px, #e3d6d2 1560px, #ecdccf 1700px, #e9e2c9 1810px, #ebe0d4 1920px); margin-top: auto; }
.task { width: 62px; display: grid; place-items: center; position: relative; padding-bottom: 1px; }
.task svg { width: 31px; height: 31px; }
.run::after { content: ""; position: absolute; bottom: 0; left: 7px; width: 51px; height: 3px; background: #e81123; }
.more::after { background: linear-gradient(90deg, #e81123 80%, #f07080 80%); }
.active { background: #f6f0ec; }
.active::after { left: 2px; width: 60px; background: linear-gradient(90deg, #e81123 94%, #f07080 94%); }
.tt { font: bold 22px "Liberation Serif", serif; }
.ge { font: bold 7.600px "Liberation Sans", sans-serif; }
.tray { margin-left: auto; display: flex; align-items: center; color: #111; font-family: "Open Sans", "Noto Sans CJK SC", sans-serif; }
.tray > svg:first-child { width: 150px; height: 30px; margin-right: -27px; }
.ime { font-size: 20px; width: 29px; }
.clock { display: flex; flex-direction: column; align-items: center; width: 86px; font-size: 15px; line-height: 23px; }
.note { width: 34px; height: 34px; margin: 0 18px 0 17px; font-size: 17px; }
```
FILE: section.js
```js
const NS = 'http://www.w3.org/2000/svg';
function add(parent, tag, attrs, text) {
  const el = document.createElementNS(NS, tag);
  for (const k in attrs) el.setAttribute(k, attrs[k]);
  if (text !== undefined) el.textContent = text;
  parent.appendChild(el);
}

// Trace axis: a tick every 50 CMP, a label every 100.
const axis = document.getElementById('axis');
add(axis, 'path', { d: 'M86 78.500h1525', stroke: '#333', 'stroke-width': 1.500 });
for (let i = 0; i < 24; i++) {
  const x = Math.round(122.5 + 62.5 * i) + 0.5;
  add(axis, 'path', { d: `M${x} ${i % 2 ? 67 : 63}V78`, stroke: '#222', 'stroke-width': 1.4 });
  if (i % 2 === 0) add(axis, 'text', { x: x - 1.5, y: 58, 'text-anchor': 'middle' }, 100 + 50 * i);
}
add(axis, 'text', { x: 91, y: 58, textLength: 36 }, 'CMP');
add(axis, 'path', { d: 'M1083.500 15v48', stroke: '#1d7a1d' });

// Impedance scale.
const ticks = document.getElementById('ticks');
const yOf = v => 68.5 + (12000 - v) * 0.0953;
for (let v = 12600; v > 4350; v -= 100) {
  const major = v % 1000 === 0;
  add(ticks, 'path', { d: `M1 ${Math.round(yOf(v))}h${major ? 5 : 3}`, stroke: '#111', 'stroke-width': major ? 2 : 1.2 });
  if (major) add(ticks, 'text', { x: 8.5, y: yOf(v) + 6, 'font-size': 16, fill: '#222', textLength: v > 9999 ? 43 : 35 }, v);
}
add(ticks, 'path', { d: 'M0 1.500h7M0 800h7', stroke: '#f00', 'stroke-width': 2 });
add(ticks, 'text', { x: 9, y: 17, 'font-size': 16, fill: '#ff2020', textLength: 43 }, '12715');
add(ticks, 'text', { x: 8, y: 795, 'font-size': 16, fill: '#ff2020' }, '4328.72');

// Horizons, digitised in three panels; each panel has its own origin and scale.
const panels = [
  { ox: 190, oy: 400, sx: 3, sy: 3 },
  { ox: 680, oy: 500, sx: 3, sy: 3 },
  { ox: 1150, oy: 380, sx: 2.613, sy: 3 }
];
const horizons = [
  ['18,113 95,110 125,97 150,84 180,84 213,77 240,100 270,115 300,137 335,138 350,148 420,148 440,180 485,225 520,200 545,213 575,215 600,230 625,220 655,222 680,240 705,275 735,265 765,232 800,213 845,206 880,216 905,215 950,238 1005,258 1040,243 1075,260 1115,285 1155,282 1210,222 1240,250 1275,260 1315,326 1410,325 1445,340',
   '0,20 20,8 95,18 125,30 155,75 170,110 215,190 240,225 270,280 300,302 345,275 380,292 430,262 490,235 530,235 590,195 660,195 710,175 760,190 790,205 840,218 900,230 950,200 980,168 1050,158 1075,178 1130,180 1195,158 1250,115 1300,78 1350,45 1400,5',
   '10,333 20,322 40,318 80,270 110,238 150,223 190,232 260,236 350,220 430,207 520,182 600,152 700,103 790,80 850,66 960,66 1000,75 1100,93 1240,118 1310,128 1493,130'],
  ['18,295 100,285 130,295 225,300 250,322 300,345 330,335 400,345 450,375 480,375 520,345 570,378 620,390 700,415 740,400 850,325 900,345 960,385 1060,385 1130,395 1215,358 1260,385 1310,430 1380,440 1440,462',
   '0,138 30,133 85,142 130,165 180,240 225,350 260,420 300,442 350,412 380,418 430,385 500,348 540,335 590,305 640,308 710,297 780,312 840,330 900,338 960,318 1000,315 1030,285 1110,293 1170,285 1230,240 1290,195 1340,160 1400,132',
   '10,483 40,478 90,430 130,408 200,405 280,398 400,362 500,325 600,278 700,232 780,213 850,210 950,220 1050,245 1150,275 1300,315 1400,332 1493,338'],
  ['18,430 60,410 95,395 115,400 145,433 190,428 240,442 300,457 345,440 395,403 430,440 475,488 520,463 580,520 690,547 740,520 815,490 850,455 890,478 930,475 960,503 1080,495 1120,500 1170,492 1215,472 1260,495 1310,548 1370,545 1415,562',
   '0,237 20,232 100,252 150,335 200,430 250,525 270,565 300,592 360,562 400,568 440,552 490,512 540,498 590,465 640,465 720,440 770,447 830,468 900,478 950,465 1020,455 1040,430 1135,432 1200,400 1290,340 1340,288 1390,285',
   '10,621 40,625 90,580 140,550 240,545 300,527 430,492 500,470 600,418 700,365 780,342 860,335 950,343 1050,370 1150,398 1250,420 1350,440 1493,446'],
  ['18,520 110,492 150,508 200,498 300,518 345,508 393,482 430,520 475,552 530,543 585,592 650,608 700,600 740,582 810,550 850,512 895,540 920,535 960,570 1040,555 1170,555 1220,535 1260,545 1315,605 1370,605 1410,622',
   '0,292 20,288 70,300 110,315 145,365 190,465 230,545 265,640 300,685 320,685 360,658 420,655 470,625 540,590 590,550 640,540 680,518 760,500 800,505 850,525 900,545 950,535 1000,525 1050,497 1130,500 1200,470 1280,420 1345,355 1390,352',
   '10,692 30,690 100,640 200,632 300,603 430,585 500,570 600,525 700,465 800,435 900,430 980,440 1100,468 1250,505 1400,525 1493,528'],
  ['18,690 90,690 135,625 230,618 320,630 390,622 440,658 475,665 505,690 540,682 600,708 650,722 690,695 740,680 770,655 810,645 845,603 890,630 925,628 960,685 1010,662 1070,668 1100,655 1180,655 1250,630 1310,700 1370,705 1405,722',
   '0,385 20,380 55,402 105,402 125,430 160,520 200,580 235,640 265,715 290,752 318,768 370,733 410,740 460,705 510,668 560,620 600,592 650,578 690,555 710,565 760,535 795,532 840,560 900,592 950,580 1000,570 1060,550 1090,550 1130,562 1180,545 1240,485 1290,465 1345,412 1385,412',
   '10,740 60,720 100,700 190,703 300,665 450,660 550,630 700,560 800,518 900,508 1000,520 1150,553 1300,582 1400,595 1493,597'],
  ['18,720 40,738 90,738 110,700 130,665 160,652 240,645 315,652 330,662 395,662 430,690 475,690 510,722 590,718 630,747 660,745 690,712 740,705 770,680 810,665 835,627 860,627 895,650 925,648 960,712 1010,680 1045,680 1070,690 1100,678 1180,678 1250,650 1290,710 1315,725 1360,725 1400,748 1450,720',
   '0,405 25,402 60,425 105,420 125,455 155,530 210,610 245,680 270,755 318,800 370,765 415,768 460,735 510,700 550,650 600,618 650,598 685,575 710,582 760,548 800,540 840,570 890,605 935,605 1000,583 1090,572 1130,585 1170,570 1230,515 1280,500 1340,435 1385,430',
   '10,765 90,725 150,733 190,733 300,698 460,702 550,675 700,600 820,555 900,548 1000,550 1150,580 1300,610 1400,623 1493,625']
];

function interp(pts, x) {
  if (x <= pts[0][0]) return pts[0][1];
  for (let i = 1; i < pts.length; i++) {
    if (x <= pts[i][0]) {
      const [a, b] = pts[i - 1], [c, d] = pts[i];
      return b + (d - b) * (x - a) / (c - a);
    }
  }
  return pts[pts.length - 1][1];
}

const curves = horizons.map(parts => {
  const pts = parts.flatMap((s, p) => s.split(' ').map(q => {
    const [x, y] = q.split(',').map(Number), k = panels[p];
    return [k.ox + x / k.sx, k.oy + y / k.sy];
  }));
  return Array.from({ length: 1525 }, (_, i) => {
    const x = 196 + i, r = Math.round(Math.max(2, Math.min(15, (x - 1140) / 8)));
    let s = 0;
    for (let d = -r; d <= r; d++) s += interp(pts, x + d);
    return s / (2 * r + 1) - 222;
  });
});

// Impedance between neighbouring horizons (in hundreds) at four stations, west to east.
const P = s => s.split(' ').map(q => { const [t, v] = q.split(':').map(Number); return [t, v * 100]; });
const eastLower = [
  '0:118 .1:107 .3:102 .5:107 .65:120 .75:110 .87:103 .92:90 .97:65 1:55',
  '0:55 .06:80 .1:100 .25:125 .38:123 .5:100 .6:103 .78:122 .85:105 .92:85 .96:65 1:60',
  '0:60 .12:75 .16:98 .22:90 .27:98 .33:90 .4:105 .6:123 .75:107 .84:90 .89:82 1:72',
  '0:72 .2:80 .35:85 .5:100 .8:112 1:108'
];
const profiles = [
  ['0:93 .1:105 .25:93 .35:95 .43:105 .52:100 .65:114 .76:113 .86:102 .93:106 1:118',
   '0:118 .12:107 .3:105 .37:107 .42:116 .48:107 .75:107 .9:111 .94:92 .97:85 1:76',
   '0:76 .06:85 .13:95 .22:112 .3:95 .36:85 .45:80 .53:84 .6:95 .7:114 .78:107 .88:86 .94:84 1:63',
   '0:63 .05:85 .12:110 .16:116 .25:102 .38:95 .5:98 .6:105 .68:115 .75:93 .8:87 .84:83 .88:82 .91:68 .94:50 1:45',
   '0:45 .3:50 .45:75 .6:88 .8:100 1:104'],
  ['0:97 .1:100 .2:106 .38:112 .5:109 .65:100 .8:107 1:118',
   '0:118 .2:106 .35:103 .42:109 .5:105 .65:109 .75:114 .83:95 .88:87 .94:102 1:74',
   '0:74 .08:88 .2:115 .35:97 .45:86 .5:81 .58:95 .7:117 .82:97 .9:87 1:81',
   '0:81 .1:92 .35:118 .55:102 .65:98 .75:88 .85:70 .92:58 1:56',
   '0:56 .2:58 .35:80 .5:87 .7:105 1:105'],
  ['0:60 .03:95 .1:91 .16:102 .25:99 .35:107 .45:103 .6:103 .7:100 .8:105 .9:108 .98:117 1:117', ...eastLower],
  ['0:55 .06:62 .08:90 .11:100 .16:89 .2:93 .24:88 .29:91 .33:108 .45:103 .5:98 .57:104 .62:105 .7:100 .8:105 .9:108 .98:118 1:118', ...eastLower]
].map(st => st.map(P));

const palette = [[4328, 173, 11, 11], [5000, 180, 38, 31], [6000, 191, 106, 82], [7000, 195, 160, 126], [8000, 208, 218, 171], [8350, 208, 235, 187], [8450, 255, 255, 255], [8600, 216, 255, 255], [9000, 196, 226, 227], [10000, 142, 160, 162], [11000, 91, 104, 102], [12000, 35, 41, 40], [12715, 0, 0, 0]];
const channels = [1, 2, 3].map(c => palette.map(p => [p[0], p[c]]));
const lut = Array.from({ length: 1280 }, (_, i) => channels.map(c => interp(c, i * 10)));

const ctx = document.getElementById('section').getContext('2d');
const img = ctx.createImageData(1525, 698);
const station = [[196, 0], [715, 0], [780, 1], [1010, 1], [1190, 2], [1380, 2], [1470, 2.4], [1600, 3], [1721, 3]];
for (let i = 0; i < 1525; i++) {
  const x = 196 + i, w = interp(station, x), s = Math.min(2, Math.floor(w)), f = w - s;
  const top = Math.round(curves[0][i]), bottom = Math.round(curves[5][i]);
  for (let y = top; y <= bottom; y++) {
    let k = 0;
    while (k < 4 && y > curves[k + 1][i]) k++;
    const a = curves[k][i], b = curves[k + 1][i];
    const t = Math.max(0, Math.min(1, (y - a) / Math.max(1, b - a)));
    let v = interp(profiles[s][k], t) * (1 - f) + interp(profiles[s + 1][k], t) * f;
    const depth = y - top;
    // Sampling ripple under the upper boundary.
    if (depth < 14 && x > 430 && x < 1450) v += 450 * Math.sin(x * 0.9 + y * 0.8) * (1 - depth / 14);
    if (depth < 2 && x > 870 && x < 1440) v = (x + 3 * Math.round(Math.sin(x / 17))) % 11 < 6 ? 6300 : 9000;
    const c = lut[Math.max(0, Math.min(1271, Math.round(v / 10)))];
    const o = (y * 1525 + i) * 4;
    img.data[o] = c[0]; img.data[o + 1] = c[1]; img.data[o + 2] = c[2]; img.data[o + 3] = 255;
  }
}
ctx.putImageData(img, 0, 0);
```
